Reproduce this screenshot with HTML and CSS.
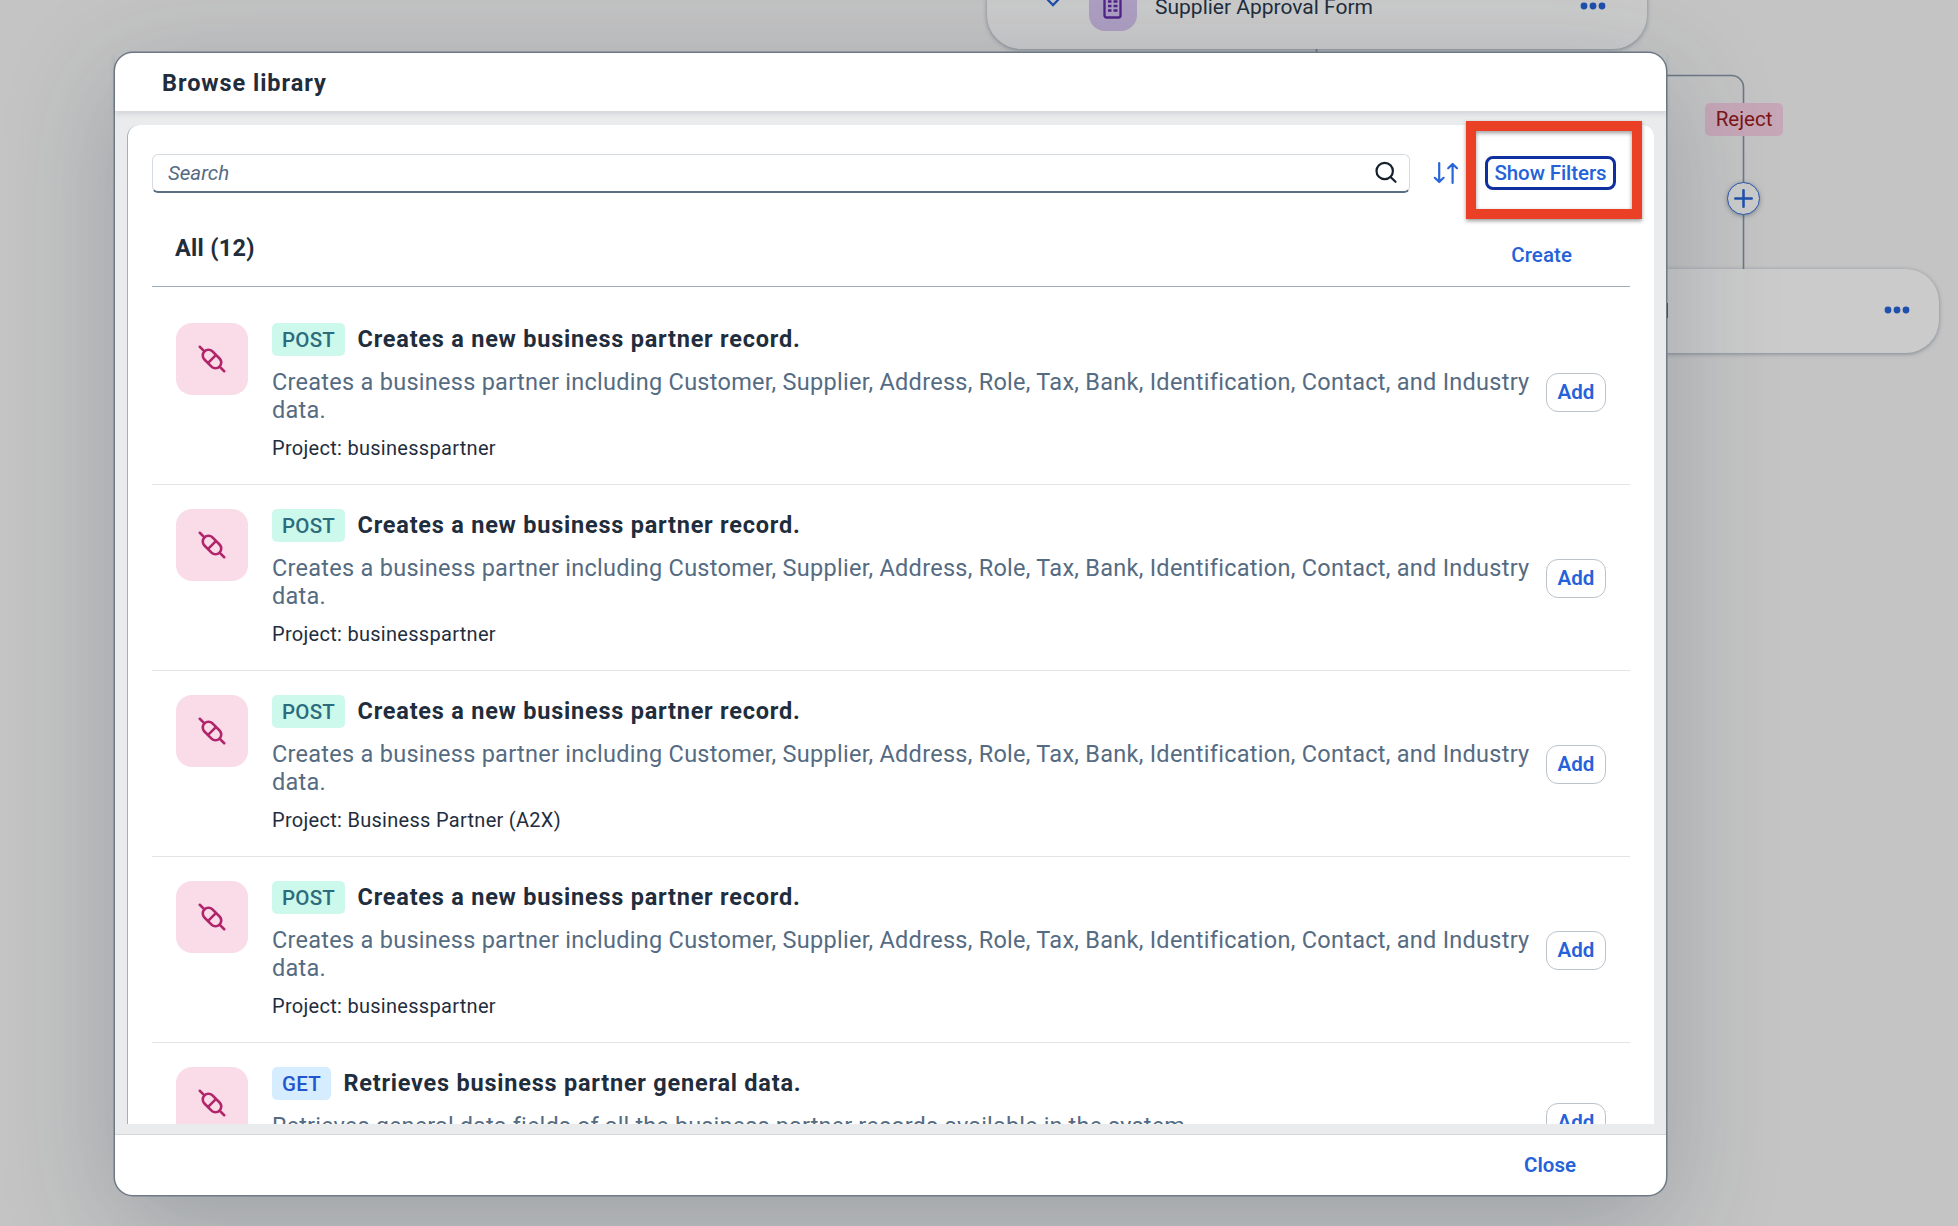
FILE: index.html
```
<!DOCTYPE html>
<html lang="en">
<head>
<meta charset="utf-8">
<title>Browse library</title>
<link rel="stylesheet" href="styles.css">
</head>
<body>
<svg class="symbols" aria-hidden="true">
  <symbol id="connector" viewBox="0 0 72 72">
    <g transform="rotate(45 36 36)" fill="none" stroke="#b0256b" stroke-width="2.6" stroke-linecap="round">
      <rect x="25.300" y="30.300" width="21.400" height="11.400" rx="5.700"/>
      <path d="M36 30.500v11M18.700 36h6.600M46.700 36h6.600"/>
    </g>
  </symbol>
  <symbol id="dots" viewBox="0 0 26 8">
    <g fill="#1f50ab"><circle cx="4" cy="4" r="3.4"/><circle cx="13" cy="4" r="3.4"/><circle cx="22" cy="4" r="3.4"/></g>
  </symbol>
</svg>

<div class="canvas">
  <svg class="edges" width="1958" height="1226" fill="none" stroke="#6b7887" stroke-width="1.6">
    <path d="M1316.5 48v6M1660 75.5h71.500a12 12 0 0 1 12 12V270"/>
  </svg>
  <div class="node node-form">
    <svg class="node-chevron" viewBox="0 0 14 9"><path d="M1.500 1.500 7 7l5.500-5.500" fill="none" stroke="#1f50ab" stroke-width="2.300"/></svg>
    <span class="node-icon"><svg width="20" height="26" viewBox="0 0 20 26"><rect x="1.500" y="1.500" width="16" height="23" rx="2" fill="none" stroke="#4f2487" stroke-width="2.300"/><path d="M5 8.500h3.500m2 0h4M5 13h3.500m2 0h4M5 17.500h3.500m2 0h4" stroke="#4f2487" stroke-width="2.600"/></svg></span>
    <span class="node-label">Supplier Approval Form</span>
    <svg class="node-dots"><use href="#dots"/></svg>
  </div>
  <div class="node node-next"><span class="node-tick"></span><svg class="node-dots"><use href="#dots"/></svg></div>
  <span class="branch">Reject</span>
  <span class="plus"><svg viewBox="0 0 34 34"><path d="M17 8v18M8 17h18" stroke="#1f50ab" stroke-width="2.800" stroke-linecap="round"/></svg></span>
</div>

<main class="dialog">
  <header class="dialog-head"><h1>Browse library</h1></header>
  <div class="dialog-body">
    <section class="panel">
      <div class="toolbar">
        <div class="search"><span>Search</span>
          <svg width="24" height="24" viewBox="0 0 24 24" fill="none" stroke="#14202c" stroke-width="2.200" stroke-linecap="round"><circle cx="10.700" cy="10" r="8.200"/><path d="m16.800 16.200 4.700 4.600"/></svg>
        </div>
        <svg class="sort" width="26" height="24" viewBox="0 0 26 24" fill="none" stroke="#2865d8" stroke-width="2.200" stroke-linecap="round" stroke-linejoin="round"><path d="M6.200 2v19M1.800 16.800 6.200 21l4.400-4.200M19.600 22V3M15.200 7.200 19.600 3 24 7.200"/></svg>
        <div class="filters"><button class="filters-button">Show Filters</button><span class="highlight"></span></div>
      </div>
      <div class="list-head"><h2>All (12)</h2><button class="create">Create</button></div>
      <ul class="list">
        <li class="item">
          <svg class="tile"><use href="#connector"/></svg>
          <div class="text">
            <div class="line"><span class="method post">POST</span><h3>Creates a new business partner record.</h3></div>
            <p class="desc">Creates a business partner including Customer, Supplier, Address, Role, Tax, Bank, Identification, Contact, and Industry data.</p>
            <p class="project">Project: businesspartner</p>
          </div>
          <button class="add">Add</button>
        </li>
        <li class="item">
          <svg class="tile"><use href="#connector"/></svg>
          <div class="text">
            <div class="line"><span class="method post">POST</span><h3>Creates a new business partner record.</h3></div>
            <p class="desc">Creates a business partner including Customer, Supplier, Address, Role, Tax, Bank, Identification, Contact, and Industry data.</p>
            <p class="project">Project: businesspartner</p>
          </div>
          <button class="add">Add</button>
        </li>
        <li class="item">
          <svg class="tile"><use href="#connector"/></svg>
          <div class="text">
            <div class="line"><span class="method post">POST</span><h3>Creates a new business partner record.</h3></div>
            <p class="desc">Creates a business partner including Customer, Supplier, Address, Role, Tax, Bank, Identification, Contact, and Industry data.</p>
            <p class="project">Project: Business Partner (A2X)</p>
          </div>
          <button class="add">Add</button>
        </li>
        <li class="item">
          <svg class="tile"><use href="#connector"/></svg>
          <div class="text">
            <div class="line"><span class="method post">POST</span><h3>Creates a new business partner record.</h3></div>
            <p class="desc">Creates a business partner including Customer, Supplier, Address, Role, Tax, Bank, Identification, Contact, and Industry data.</p>
            <p class="project">Project: businesspartner</p>
          </div>
          <button class="add">Add</button>
        </li>
        <li class="item item-short">
          <svg class="tile"><use href="#connector"/></svg>
          <div class="text">
            <div class="line"><span class="method get">GET</span><h3>Retrieves business partner general data.</h3></div>
            <p class="desc desc-short">Retrieves general data fields of all the business partner records available in the system.</p>
          </div>
          <button class="add">Add</button>
        </li>
      </ul>
    </section>
  </div>
  <footer class="dialog-foot"><button class="close">Close</button></footer>
</main>
</body>
</html>
```
FILE: styles.css
```
* { box-sizing: border-box; }
body {
  margin: 0;
  height: 1226px;
  padding: 53px 292px 31px 115px;
  overflow: hidden;
  background: #c4c4c4;
  color: #1f2d3d;
  font-family: Roboto, "Liberation Sans", sans-serif;
}
h1, h2, h3, p, ul { margin: 0; padding: 0; }
h1, h2, h3 { font-size: 23.5px; font-weight: 700; line-height: 32px; }
button {
  padding: 0;
  border: 0;
  background: none;
  color: #2562d9;
  font: 500 20.5px/32px Roboto, "Liberation Sans", sans-serif;
}
.symbols { position: absolute; width: 0; height: 0; }

/* Process canvas behind the dialog */
.canvas { position: absolute; inset: 0; overflow: hidden; }
.edges { position: absolute; inset: 0; }
.node {
  position: absolute;
  background: #cbcbcb;
  box-shadow: 0 1px 4px rgba(60, 75, 95, .5);
}
.node-form { left: 987px; top: -36px; width: 660px; height: 85px; border-radius: 34px; }
.node-next { left: 1300px; top: 269px; width: 639px; height: 84px; border-radius: 33px; }
.node-chevron { position: absolute; left: 59px; top: 34px; width: 14px; height: 9px; }
.node-icon {
  position: absolute;
  left: 102px;
  top: 19px;
  width: 48px;
  height: 48px;
  padding: 10px 0 0 14px;
  border-radius: 16px;
  background: #ae9fc3;
}
.node-icon svg { display: block; }
.node-label {
  position: absolute;
  left: 168px;
  top: 27px;
  line-height: 32px;
  font-size: 21px;
  white-space: nowrap;
}
.node-dots { position: absolute; width: 26px; height: 8px; }
.node-form .node-dots { left: 593px; top: 38px; }
.node-next .node-dots { left: 584px; top: 37px; }
.node-tick { position: absolute; left: 365px; top: 34px; width: 3px; height: 15px; background: #1f2d3d; }
.branch {
  position: absolute;
  left: 1705px;
  top: 103px;
  width: 78px;
  height: 33px;
  border-radius: 5px;
  background: #c6a7b8;
  color: #7d1416;
  font-size: 20.5px;
  line-height: 32px;
  text-align: center;
}
.plus {
  position: absolute;
  left: 1727px;
  top: 182px;
  width: 33px;
  height: 33px;
  border: 1.5px solid #2a58ab;
  border-radius: 50%;
  background: #cbcbcb;
  box-shadow: 0 1px 4px rgba(60, 75, 95, .5);
}
.plus svg { display: block; width: 100%; height: 100%; }

/* Dialog */
.dialog {
  position: relative;
  display: flex;
  flex-direction: column;
  height: 1142px;
  border-radius: 18px;
  background: #fff;
  box-shadow: 0 0 0 1.5px #6f7a86, 0 28px 110px rgba(34, 53, 72, .26);
}
.dialog-head {
  position: relative;
  height: 59px;
  padding: 14px 47px 0;
  border-bottom: 1px solid #d9d9d9;
  box-shadow: 0 2px 5px rgba(34, 53, 72, .12);
}
.dialog-head h1 { letter-spacing: .95px; }
.dialog-body { flex: 1; min-height: 0; padding: 13px 12px 10px; background: #eaebed; }
.panel {
  display: flex;
  flex-direction: column;
  height: 100%;
  padding: 29px 24px 0;
  border-left: 1px solid #a3b0ba;
  border-radius: 12px 12px 0 0;
  background: #fff;
}
.dialog-foot {
  display: flex;
  justify-content: flex-end;
  height: 61px;
  padding: 14px 90px 0 0;
  border-top: 1px solid #d4d6d8;
}
.close { height: 32px; font-weight: 600; }

.toolbar { display: flex; flex: none; align-items: flex-start; height: 39px; }
.search {
  display: flex;
  justify-content: space-between;
  align-items: center;
  width: 1258px;
  height: 39px;
  padding: 0 11px 0 15px;
  border: 1.5px solid #d5dbe1;
  border-bottom: 2px solid #5b6f84;
  border-radius: 6px;
  color: #556b82;
  font-size: 20.5px;
  font-style: italic;
}
.sort { margin: 7px 0 0 23px; }
.filters { position: relative; margin: 2px 0 0 26px; }
.filters-button {
  display: block;
  width: 131px;
  height: 34px;
  border: 3px solid #10309f;
  border-radius: 8px;
  line-height: 28px;
  letter-spacing: -.09px;
  white-space: nowrap;
}
.highlight {
  position: absolute;
  left: -19px;
  top: -35px;
  width: 176px;
  height: 98px;
  border: 10px solid #ea4025;
  box-shadow: 0 2px 4px rgba(0, 0, 0, .4), inset 0 2px 4px rgba(0, 0, 0, .4);
}
.list-head {
  display: flex;
  flex: none;
  justify-content: space-between;
  align-items: flex-start;
  height: 94px;
  padding: 39px 58px 0 23px;
  border-bottom: 1px solid #9dabb8;
}
.list-head h2 { letter-spacing: .3px; }
.create { margin-top: 7px; letter-spacing: .08px; }

/* Library entries */
.list { flex: 1; min-height: 0; overflow: hidden; padding-top: 12px; list-style: none; }
.item {
  display: flex;
  align-items: flex-start;
  height: 186px;
  padding: 24px 24px 22px;
  border-bottom: 1px solid #e3e4e6;
}
.item-short { height: 158px; }
.tile { flex: none; width: 72px; height: 72px; border-radius: 16px; background: #f9dce7; }
.text { flex: 1; min-width: 0; margin-left: 24px; }
.line { display: flex; gap: 12.4px; height: 32.5px; }
.line h3 { letter-spacing: .77px; }
.method {
  height: 32.5px;
  padding: 0 10px;
  border-radius: 5px;
  font-size: 20.5px;
  font-weight: 500;
  line-height: 34px;
  letter-spacing: .25px;
}
.post { background: #cdf9ec; color: #2c6c7c; }
.get { background: #d5edff; color: #2355cc; }
.desc {
  margin-top: 12.5px;
  width: 1262px;
  color: #556b82;
  font-size: 23.5px;
  line-height: 28px;
  letter-spacing: .27px;
}
.desc-short { letter-spacing: .14px; }
.project { margin-top: 10px; font-size: 20px; line-height: 28px; letter-spacing: .29px; }
.add {
  align-self: center;
  flex: none;
  width: 60px;
  height: 39px;
  margin-top: -1px;
  border: 1.5px solid #bcc3cc;
  border-radius: 12px;
  background: #fff;
  font-weight: 600;
  line-height: 36px;
}
```
